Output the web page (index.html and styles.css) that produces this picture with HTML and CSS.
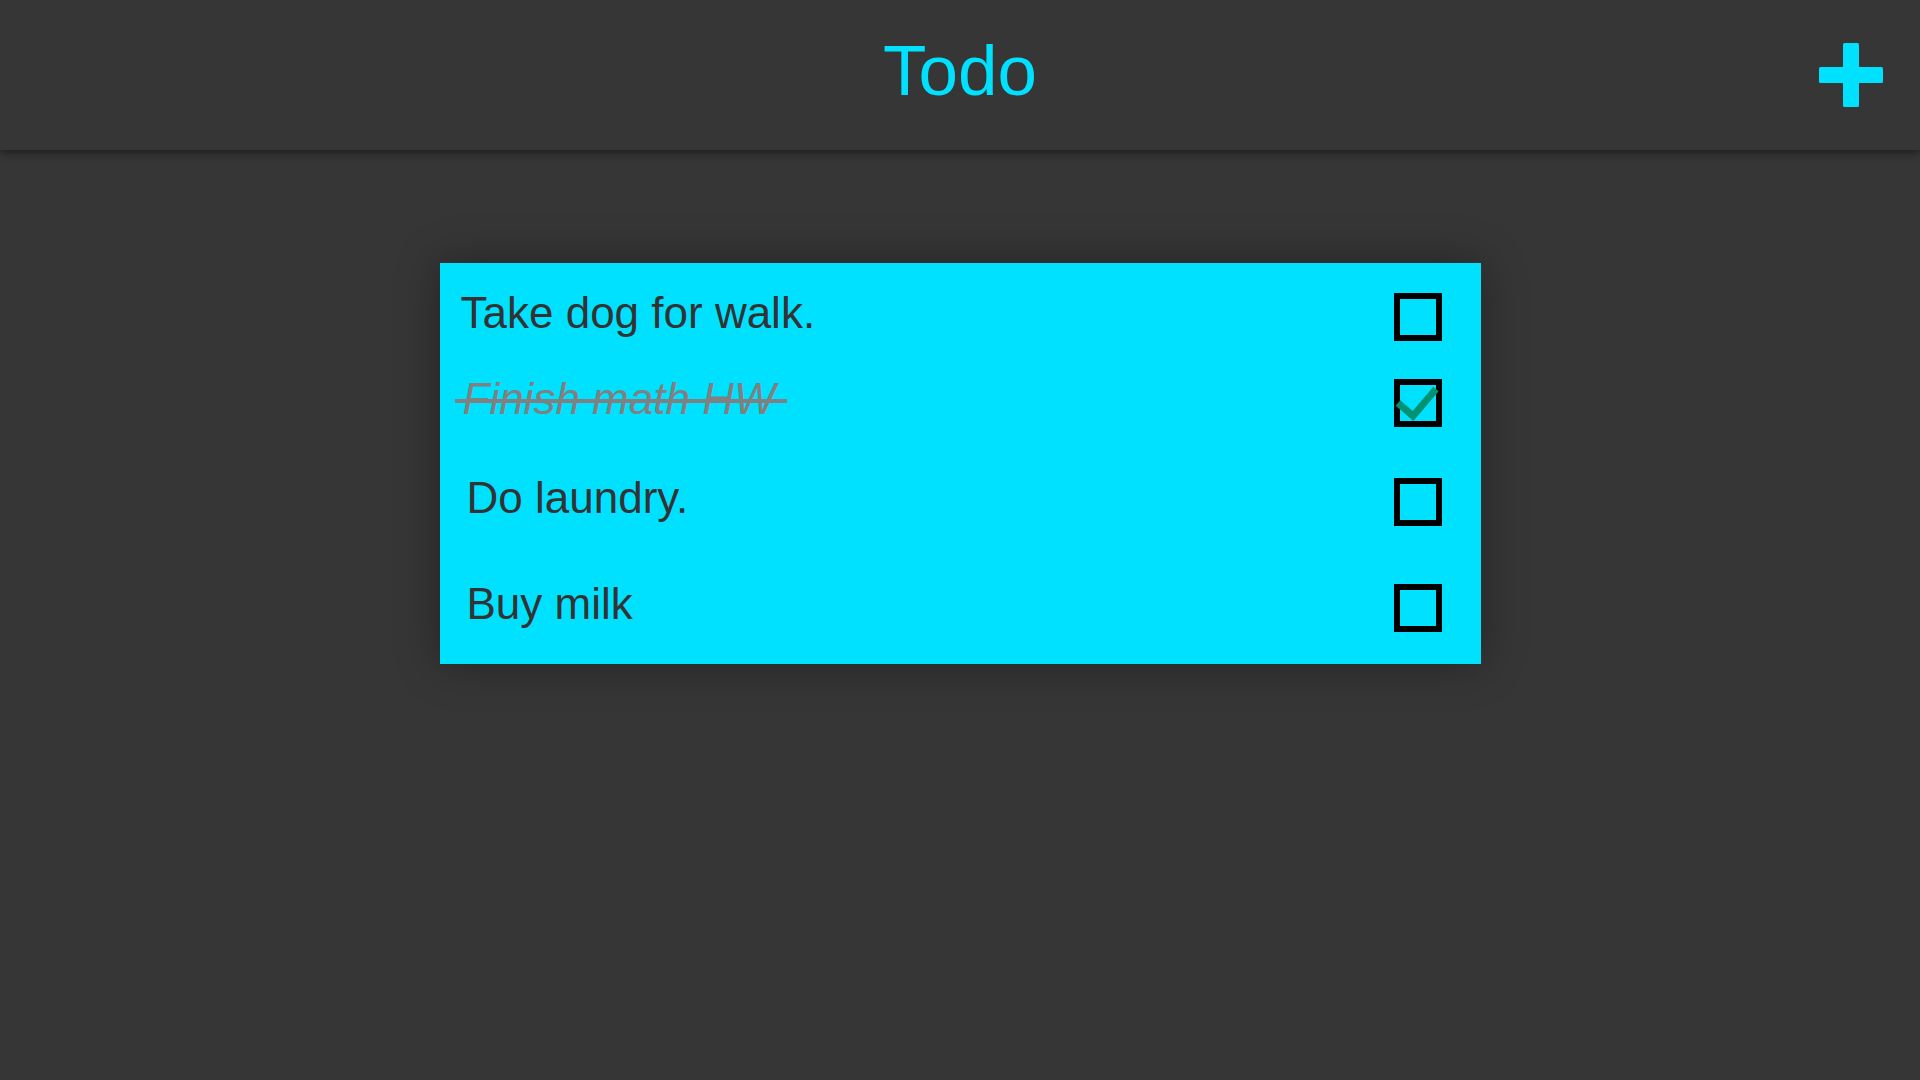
FILE: index.html
```html
<!DOCTYPE html>
<html lang="en">
<head>
<meta charset="utf-8">
<title>Todo</title>
<link rel="stylesheet" href="styles.css">
</head>
<body>
<header class="topbar">
  <div class="topbar-spacer"></div>
  <h1 class="title">Todo</h1>
  <button class="add-btn" aria-label="Add">
    <svg width="64" height="64" viewBox="0 0 64 64"><rect x="24" y="0" width="16" height="64" rx="1.5" fill="#00e1ff"/><rect x="0" y="24" width="64" height="16" rx="1.5" fill="#00e1ff"/></svg>
  </button>
</header>
<main class="content">
  <section class="card">
    <div class="row row-1">
      <span class="task">Take dog for walk.</span>
      <span class="box"></span>
    </div>
    <div class="row row-2">
      <span class="task done"><span class="done-text">Finish math HW</span></span>
      <span class="box checked">
        <svg width="48" height="48" viewBox="0 0 48 48"><polyline points="4,24 19,37 42,10" fill="none" stroke="#009272" stroke-width="7" stroke-linecap="butt" stroke-linejoin="miter"/></svg>
      </span>
    </div>
    <div class="row row-3">
      <span class="task indent">Do laundry.</span>
      <span class="box"></span>
    </div>
    <div class="row row-4">
      <span class="task indent">Buy milk</span>
      <span class="box"></span>
    </div>
  </section>
</main>
</body>
</html>
```
FILE: styles.css
```css
html, body {
  margin: 0;
  padding: 0;
}
body {
  background: #363636;
  font-family: "Liberation Sans", Arial, sans-serif;
  width: 1920px;
  height: 1080px;
  overflow: hidden;
}
.topbar {
  height: 150px;
  box-sizing: border-box;
  background: #363636;
  display: grid;
  grid-template-columns: 1fr auto 1fr;
  align-items: start;
  box-shadow: 0 3px 8px rgba(0, 0, 0, 0.45);
  position: relative;
  z-index: 1;
}
.title {
  margin: 0;
  padding-top: 30px;
  font-size: 71px;
  font-weight: 400;
  color: #00e1ff;
  line-height: normal;
}
.add-btn {
  justify-self: end;
  margin: 43px 37px 0 0;
  padding: 0;
  border: 0;
  background: none;
  width: 64px;
  height: 64px;
  display: block;
}
.add-btn svg {
  display: block;
}
.content {
  display: flex;
  justify-content: center;
  padding-top: 113px;
}
.card {
  width: 1041px;
  box-sizing: border-box;
  background: #00e1ff;
  padding: 30px 39px 32px 0;
  box-shadow: 0 0 40px rgba(0, 0, 0, 0.35);
}
.row {
  display: flex;
  justify-content: space-between;
  align-items: flex-start;
  height: 48px;
}
.row-2 { margin-top: 38px; }
.row-3 { margin-top: 51px; }
.row-4 { margin-top: 58px; }
.task {
  font-size: 44px;
  line-height: 40px;
  color: #333333;
  padding-left: 21px;
  white-space: nowrap;
}
.task.indent {
  padding-left: 27px;
}
.task.done {
  padding-left: 15px;
}
.done-text {
  display: inline-block;
  position: relative;
  padding: 0 12px 0 8px;
  font-style: italic;
  color: #808080;
}
.done-text::after {
  content: "";
  position: absolute;
  left: 0;
  right: 0;
  top: 20px;
  height: 4px;
  background: #808080;
}
.box {
  width: 48px;
  height: 48px;
  box-sizing: border-box;
  border: 6px solid #000;
  display: block;
  position: relative;
  flex: none;
}
.box.checked svg {
  position: absolute;
  left: -6px;
  top: -6px;
  overflow: visible;
}
```
